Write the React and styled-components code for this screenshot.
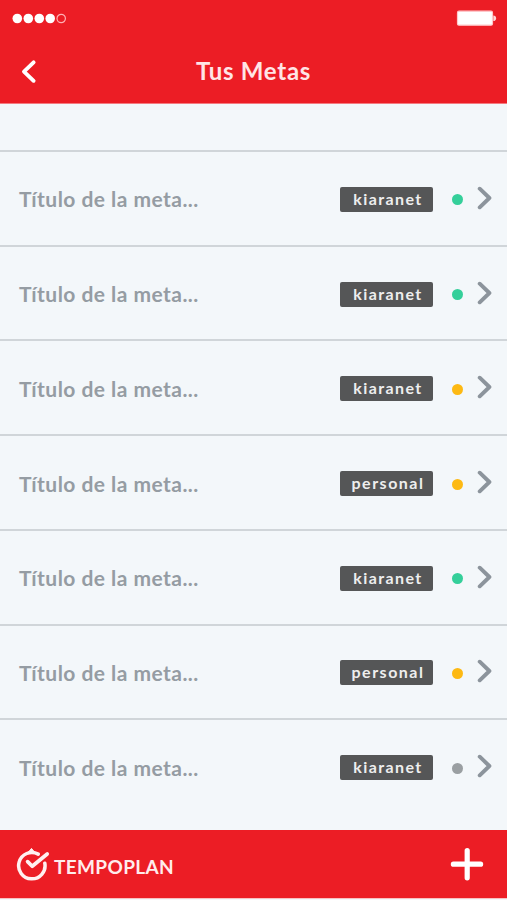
import React from 'react'
import styled, { createGlobalStyle } from 'styled-components'

const GlobalStyle = createGlobalStyle`
  * {
    box-sizing: border-box;
  }
  body {
    margin: 0;
    background: #f3f7fa;
    font-family: Lato, 'Open Sans', sans-serif;
  }
`
const Screen = styled.div`
  display: flex;
  flex-direction: column;
  width: 507px;
  height: 900px;
  overflow: hidden;
  background: #f3f7fa;
`
const Header = styled.header`
  flex: none;
  height: 104px;
  background: #ec1d25;
  border-bottom: 1px solid #f47a80;
`
const StatusBar = styled.div`
  display: flex;
  justify-content: space-between;
  height: 38px;
  padding: 9px 10px 0 12px;
`
const NavBar = styled.div`
  display: grid;
  grid-template-columns: 60px 1fr 60px;
  align-items: center;
  height: 66px;
`
const BackButton = styled.button`
  display: flex;
  padding: 0 0 0 20px;
  border: none;
  background: none;
`
const Title = styled.h1`
  margin: 0;
  text-align: center;
  white-space: nowrap;
  font-size: 24px;
  line-height: 30px;
  font-weight: 700;
  letter-spacing: 0.7px;
  color: #ffe5e6;
`
const List = styled.ul`
  flex: 1;
  margin: 0;
  padding: 46px 0 0;
  list-style: none;
`
const Row = styled.li`
  display: flex;
  align-items: center;
  height: 94.72px;
  padding: 2px 14px 0 19px;
  border-top: 2px solid #d0d5d9;
`
const RowTitle = styled.span`
  flex: 1;
  font-size: 21px;
  line-height: 28px;
  font-weight: 700;
  letter-spacing: 0.46px;
  color: #959ca3;
`
const Tag = styled.span`
  width: 93px;
  height: 25px;
  padding-left: 3px;
  border-radius: 2px;
  background: #555657;
  text-align: center;
  font-size: 16px;
  line-height: 24px;
  font-weight: 700;
  letter-spacing: ${(props) => (props.$wide ? '1.5px' : '1.4px')};
  color: #eeeeee;
`
const Dot = styled.span`
  width: 11px;
  height: 11px;
  margin: 1px 14px 0 19px;
  border-radius: 50%;
  background: ${(props) => props.$color};
`
const RowArrow = styled.svg`
  width: 16px;
  height: 24px;
  margin-bottom: 3px;
`
const Footer = styled.footer`
  display: flex;
  flex: none;
  align-items: center;
  justify-content: space-between;
  height: 69px;
  margin-bottom: 1px;
  padding: 0 22px 0 16px;
  background: #ec1d25;
  border-bottom: 1px solid #f9c0c2;
`
const Brand = styled.div`
  display: flex;
  align-items: center;
`
const BrandName = styled.span`
  margin-left: 4px;
  padding-top: 6px;
  font-size: 19px;
  line-height: 24px;
  font-weight: 700;
  letter-spacing: 0.35px;
  color: #ffecec;
`
const AddButton = styled.button`
  display: flex;
  padding: 0;
  border: none;
  background: none;
`

const GREEN = '#34cf9a'
const YELLOW = '#fdb913'
const GREY = '#9a9fa2'

const metas = [
  { tag: 'kiaranet', color: GREEN },
  { tag: 'kiaranet', color: GREEN },
  { tag: 'kiaranet', color: YELLOW },
  { tag: 'personal', color: YELLOW },
  { tag: 'kiaranet', color: GREEN },
  { tag: 'personal', color: YELLOW },
  { tag: 'kiaranet', color: GREY },
]

const Signal = () => (
  <svg width="56" height="20" viewBox="0 0 56 20">
    <circle cx="5.3" cy="9.5" r="4.8" fill="#fff" />
    <circle cx="16.3" cy="9.5" r="4.8" fill="#fff" />
    <circle cx="27.3" cy="9.5" r="4.8" fill="#fff" />
    <circle cx="38.2" cy="9.5" r="4.8" fill="#fff" />
    <circle cx="49.2" cy="9.5" r="4.2" fill="none" stroke="#ffb0b3" strokeWidth="1.2" />
  </svg>
)

const Battery = () => (
  <svg width="41" height="20" viewBox="0 0 41 20">
    <rect x="1.5" y="2.2" width="35" height="14" rx="1.5" fill="#fff" stroke="#ffc9cb" strokeWidth="1.2" />
    <path d="M37.3 6.5a2.8 2.8 0 0 1 0 5.6z" fill="#ffd5d6" />
  </svg>
)

const Logo = () => (
  <svg width="34" height="36" viewBox="0 0 34 36">
    <path
      d="M22.2 8.1A13.2 13.2 0 1 0 28.8 17.2"
      fill="none"
      stroke="#fff0f0"
      strokeWidth="3.5"
      strokeLinecap="round"
    />
    <path d="M11.2 6.8L13.4 5L15.5 2.4L17.6 5L20 6.8z" fill="#fff0f0" stroke="#fff0f0" strokeLinejoin="round" />
    <path
      d="M11.6 15.6L16.2 20.2L31.2 8"
      fill="none"
      stroke="#fff0f0"
      strokeWidth="3.7"
      strokeLinecap="round"
      strokeLinejoin="round"
    />
  </svg>
)

const App = () => {
  return (
    <>
      <GlobalStyle />
      <Screen>
        <Header>
          <StatusBar>
            <Signal />
            <Battery />
          </StatusBar>
          <NavBar>
            <BackButton aria-label="Volver">
              <svg width="18" height="26" viewBox="0 0 18 26">
                <path
                  d="M13.6 4.4L4 13.6L13.6 22.8"
                  fill="none"
                  stroke="#fff"
                  strokeWidth="3.9"
                  strokeLinecap="round"
                  strokeLinejoin="round"
                />
              </svg>
            </BackButton>
            <Title>Tus Metas</Title>
          </NavBar>
        </Header>
        <List>
          {metas.map((meta, i) => (
            <Row key={i}>
              <RowTitle>Título de la meta...</RowTitle>
              <Tag $wide={meta.tag === 'personal'}>{meta.tag}</Tag>
              <Dot $color={meta.color} />
              <RowArrow viewBox="0 0 16 24">
                <path
                  d="M2.7 2.7L12.4 12L2.7 21.3"
                  fill="none"
                  stroke="#8c949c"
                  strokeWidth="3.9"
                  strokeLinecap="round"
                  strokeLinejoin="round"
                />
              </RowArrow>
            </Row>
          ))}
        </List>
        <Footer>
          <Brand>
            <Logo />
            <BrandName>TEMPOPLAN</BrandName>
          </Brand>
          <AddButton aria-label="Añadir meta">
            <svg width="36" height="36" viewBox="0 0 36 36">
              <path d="M18.2 4.6V31.8M4.4 18.2H31.6" stroke="#fff" strokeWidth="5.2" strokeLinecap="round" />
            </svg>
          </AddButton>
        </Footer>
      </Screen>
    </>
  )
}

export default App
